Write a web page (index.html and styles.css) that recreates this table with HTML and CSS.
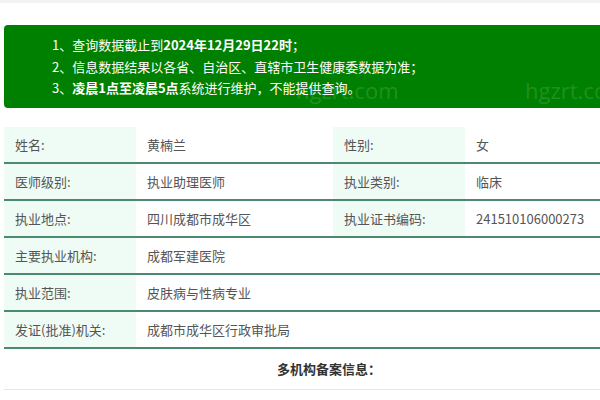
FILE: index.html
```html
<!DOCTYPE html>
<html lang="zh-CN">
<head>
<meta charset="utf-8">
<title>查询结果</title>
<link rel="stylesheet" href="styles.css">
</head>
<body>
<div class="topbar"></div>
<div class="page">
  <div class="notice">
    <p>1、查询数据截止到<b>2024年12月29日22时</b>；</p>
    <p>2、信息数据结果以各省、自治区、直辖市卫生健康委数据为准；</p>
    <p>3、<b>凌晨1点至凌晨5点</b>系统进行维护，不能提供查询。</p>
    <span class="wm wm1">hgzrt.com</span>
    <span class="wm wm2">hgzrt.com</span>
  </div>
  <table class="info">
    <colgroup>
      <col class="c1"><col class="c2"><col class="c3"><col class="c4">
    </colgroup>
    <tr><th>姓名:</th><td>黄楠兰</td><th>性别:</th><td>女</td></tr>
    <tr><th>医师级别:</th><td>执业助理医师</td><th>执业类别:</th><td>临床</td></tr>
    <tr><th>执业地点:</th><td>四川成都市成华区</td><th>执业证书编码:</th><td>241510106000273</td></tr>
    <tr><th>主要执业机构:</th><td colspan="3">成都军建医院</td></tr>
    <tr><th>执业范围:</th><td colspan="3">皮肤病与性病专业</td></tr>
    <tr><th>发证(批准)机关:</th><td colspan="3">成都市成华区行政审批局</td></tr>
  </table>
  <div class="multi">多机构备案信息：</div>
</div>
</body>
</html>
```
FILE: styles.css
```css
html, body {
  margin: 0;
  padding: 0;
  background: #fff;
  overflow: hidden;
  font-family: "Noto Sans CJK SC", "Noto Sans", sans-serif;
}
.topbar {
  height: 3px;
  background: #f2f2f2;
}
.page {
  width: 650px;
  margin-left: 4px;
}
.notice {
  position: relative;
  margin-top: 22px;
  height: 83px;
  box-sizing: border-box;
  padding: 9px 0 0 48px;
  background: #008000;
  border-radius: 4px;
  color: #fff;
  font-size: 13px;
  overflow: hidden;
}
.notice p {
  margin: 0;
  line-height: 21.5px;
  white-space: nowrap;
}
.notice b {
  font-weight: 700;
}
.wm {
  position: absolute;
  top: 50px;
  font-family: "Open Sans", sans-serif;
  font-size: 22px;
  color: rgba(255, 255, 255, 0.14);
}
.wm1 { left: 292px; }
.wm2 { left: 521px; }
.info {
  margin-top: 19px;
  width: 650px;
  border-collapse: collapse;
  table-layout: fixed;
  font-size: 13px;
  color: #555;
}
.c1 { width: 132px; }
.c2 { width: 197px; }
.c3 { width: 132px; }
.c4 { width: 189px; }
.info th, .info td {
  height: 35px;
  padding: 0 0 0 11px;
  text-align: left;
  font-weight: 400;
  border-bottom: 2px solid #4c8a70;
  white-space: nowrap;
}
.info th {
  background: #effcf5;
}
.multi {
  height: 40px;
  line-height: 40px;
  text-align: center;
  font-size: 13px;
  font-weight: 700;
  color: #333;
  border-bottom: 1px solid #e6e6e6;
}
```
